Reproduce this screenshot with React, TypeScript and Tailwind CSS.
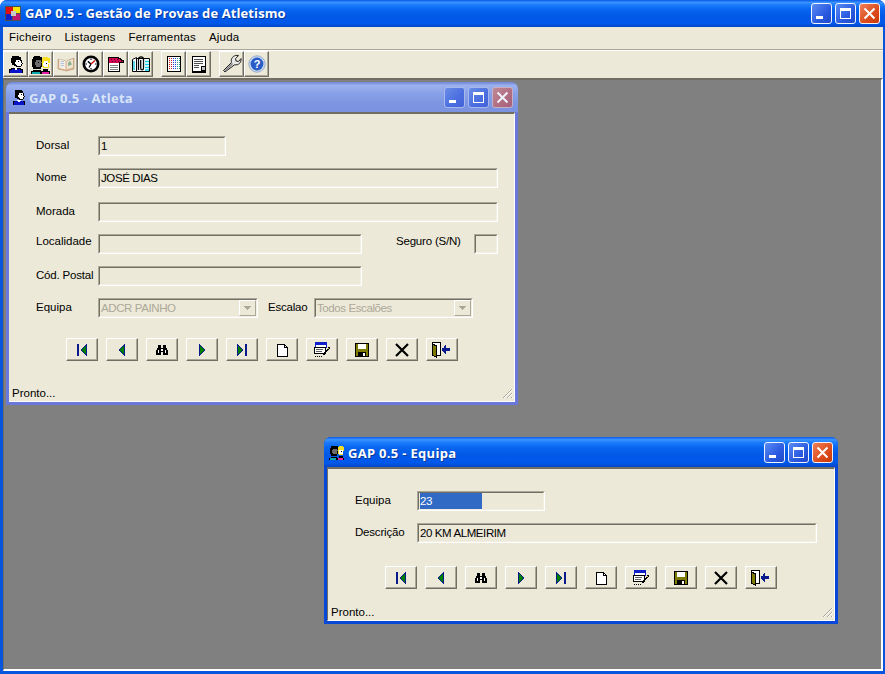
import React from 'react';

const FONT = "font-['Liberation_Sans',sans-serif]";
const TITLE_FONT = "font-['Open_Sans',sans-serif]";

const Person = ({ s = 18 }: { s?: number }) => (
  <svg width={s} height={s} viewBox="0 0 18 18" shapeRendering="crispEdges">
    <path d="M2 18V14H4V13H7V12H11V13H14V14H16V18Z" fill="#000" />
    <path d="M3 18V15H5V14H13V15H15V18Z" fill="#0a14c8" />
    <path d="M7 13V12H11V13H10V15H8V13Z" fill="#fff" />
    <path d="M5 1H12V2H14V5H15V8H16V9H15V11H14V12H9V11H7V10H5V8H4V3H5Z" fill="#000" />
    <path d="M9 5H13V6H14V8H15V9H14V11H10V10H9V9H8V7H9Z" fill="#fff" />
    <rect x="11" y="6" width="1" height="1" fill="#000" />
  </svg>
);

const People = ({ s = 20 }: { s?: number }) => (
  <svg width={s} height={s} viewBox="0 0 20 20" shapeRendering="crispEdges">
    <path d="M2 3H3V2H9V3H11V5H12V13H10V15H2V13H1V5H2Z" fill="#000" />
    <path d="M5 6H10V8H11V9H10V12H9V13H5V11H4V8H5Z" fill="#6c6c6c" />
    <rect x="7" y="8" width="1" height="1" fill="#000" />
    <path d="M0 20V17H2V16H10V20Z" fill="#000" />
    <path d="M1 20V18H9V20Z" fill="#10a8a8" />
    <path d="M11 4H12V3H17V4H19V9H18V14H12V13H11Z" fill="#f8e020" />
    <path d="M13 7H17V9H18V10H17V13H13V12H12V9H13Z" fill="#fff" />
    <rect x="15" y="9" width="1" height="1" fill="#000" />
    <path d="M10 20V17H12V15H17V17H19V20Z" fill="#000" />
    <path d="M11 20V18H18V20Z" fill="#e820a8" />
  </svg>
);

const Book = () => (
  <svg width="18" height="18" viewBox="0 0 18 18">
    <path d="M1 4L8 5.5L9 6.5L10 5.5L17 3V14L9.5 16L1 14Z" fill="#d8b08c" stroke="#b89878" strokeWidth=".6" />
    <path d="M2.2 4.2L8.5 6V14.6L2.2 13Z" fill="#f4efe4" />
    <path d="M9.6 6L16 4V12.6L9.6 14.6Z" fill="#ece4d2" />
    <path d="M11 8L13 5.8L15 9.5L11 11Z" fill="#8cb08c" />
    <path d="M3.5 6.5H7M3.5 8.5H7M3.5 10.5H7" stroke="#a8b8d8" strokeWidth=".8" />
  </svg>
);

const Clock = () => (
  <svg width="18" height="18" viewBox="0 0 18 18">
    <circle cx="9" cy="9" r="7.2" fill="#fff" stroke="#000" strokeWidth="2.6" />
    <path d="M9 3.5V5M9 13V14.5M3.5 9H5M13 9H14.5" stroke="#000" strokeWidth="1.2" />
    <path d="M9 9L5.8 6.4M9 9L7 12.5" stroke="#000" strokeWidth="1.4" />
    <path d="M9 9L13 5.5" stroke="#e00000" strokeWidth="1.2" />
  </svg>
);

const Notepad = () => (
  <svg width="18" height="18" viewBox="0 0 18 18" shapeRendering="crispEdges">
    <path d="M1 2H12V3H14V4H15V5H17V8H13V17H1Z" fill="#000" />
    <path d="M2 3H11V4H13V5H14V6H16V7H12V8H2Z" fill="#d40050" />
    <path d="M2 8H12V16H2Z" fill="#fff" />
    <path d="M3 10H11V11H3ZM3 12H11V13H3ZM3 14H11V15H3Z" fill="#808080" />
    <path d="M4 4H5V5H4ZM7 4H8V5H7ZM10 4H11V5H10ZM5 6H6V7H5ZM8 6H9V7H8ZM11 6H12V7H11ZM14 6H15V7H14Z" fill="#60002c" />
  </svg>
);

const Clip = () => (
  <svg width="20" height="18" viewBox="0 0 20 18">
    <path d="M1.5 4.5L5.5 2.5V16.5H1.5Z" fill="#fff" stroke="#000" />
    <path d="M5.5 3.5H18.5V16.5H5.5Z" fill="#fff" stroke="#000" />
    <path d="M3 6V15" stroke="#10c8d8" strokeWidth="1.4" />
    <path d="M14 6.5H18M14 9.5H18M14 12.5H18M14 15H18" stroke="#10d0e8" strokeWidth="1.4" />
    <path d="M7.5 15V4.5C7.5 1 12.5 1 12.5 4.5V13C12.5 15.5 9.7 15.5 9.7 13V5" fill="none" stroke="#000" strokeWidth="1.3" />
  </svg>
);

const GridDoc = () => (
  <svg width="16" height="18" viewBox="0 0 16 18" shapeRendering="crispEdges">
    <path d="M1.5 1.5H14.5V16.5H1.5Z" fill="#fff" stroke="#000" />
    <path d="M3 3V15M5 3V15" stroke="#e02020" strokeDasharray="1 1" />
    <path d="M7 3V15M9 3V15" stroke="#2040e0" strokeDasharray="1 1" />
    <path d="M11 3V15M13 3V15" stroke="#20a0a0" strokeDasharray="1 1" />
  </svg>
);

const FormDoc = () => (
  <svg width="16" height="18" viewBox="0 0 16 18" shapeRendering="crispEdges">
    <path d="M1.5 1.5H14.5V16.5H1.5Z" fill="#fff" stroke="#000" strokeWidth="1" />
    <path d="M3 4H12V5H3ZM3 6H12V7H3ZM3 8H12V9H3ZM3 10H8V11H3ZM3 12H8V13H3Z" fill="#505050" />
    <path d="M10.5 11.5H14.5V15.5H10.5Z" fill="#c0c0c0" stroke="#000" />
    <path d="M1 16H15V18H1Z" fill="#000" />
  </svg>
);

const Wrench = () => (
  <svg width="20" height="20" viewBox="0 0 20 20">
    <path d="M3 18L1.5 16.5L9.5 8.5C8.7 5.5 10 2.5 13.5 1.5C14.5 1.3 15.5 1.3 16.5 1.6L13.5 4.6L14 7L16.5 7.5L19 4.6C19.5 8 17 11.5 12.5 10.8Z" fill="#e8e8e8" stroke="#202020" strokeWidth="1" />
    <path d="M3 17L10.5 9.5" stroke="#808080" strokeWidth="1.4" />
  </svg>
);

const Help = () => (
  <svg width="18" height="18" viewBox="0 0 18 18">
    <circle cx="9" cy="9" r="8.2" fill="#c8d8f0" stroke="#8aa0c8" strokeWidth=".8" />
    <circle cx="9" cy="9" r="6.4" fill="#2a5cc8" />
    <text x="9" y="13" textAnchor="middle" fontSize="11" fontWeight="700" fill="#fff" fontFamily="Liberation Sans">?</text>
  </svg>
);

const AppLogo = () => (
  <svg width="16" height="15" viewBox="0 0 16 15" shapeRendering="crispEdges">
    <rect width="16" height="15" fill="#505050" />
    <rect x="1" y="1" width="7" height="7" fill="#e01010" />
    <rect x="8" y="1" width="7" height="6" fill="#f8e800" />
    <rect x="1" y="8" width="6" height="6" fill="#1020c8" />
    <rect x="8" y="8" width="7" height="6" fill="#c01870" />
    <rect x="6" y="5" width="5" height="5" fill="#c8c8c8" />
  </svg>
);

const NavFirst = () => (
  <svg width="14" height="14" viewBox="0 0 14 14" shapeRendering="crispEdges">
    <rect x="2" y="1" width="2" height="12" fill="#0a1a8c" />
    <path d="M11 1H12V13H11V12H10V11H9V10H8V9H7V8H6V6H7V5H8V4H9V3H10V2H11Z" fill="#0a1a8c" />
    <path d="M11 3V11H10V10H9V9H8V8H7V6H8V5H9V4H10V3Z" fill="#008000" />
  </svg>
);
const NavPrev = () => (
  <svg width="14" height="14" viewBox="0 0 14 14" shapeRendering="crispEdges">
    <path d="M9 1H10V13H9V12H8V11H7V10H6V9H5V8H4V6H5V5H6V4H7V3H8V2H9Z" fill="#0a1a8c" />
    <path d="M9 3V11H8V10H7V9H6V8H5V6H6V5H7V4H8V3Z" fill="#008000" />
  </svg>
);
const NavNext = () => (
  <svg width="14" height="14" viewBox="0 0 14 14" shapeRendering="crispEdges">
    <path d="M4 1H5V2H6V3H7V4H8V5H9V6H10V8H9V9H8V10H7V11H6V12H5V13H4Z" fill="#0a1a8c" />
    <path d="M5 3H6V4H7V5H8V6H9V8H8V9H7V10H6V11H5Z" fill="#008000" />
  </svg>
);
const NavLast = () => (
  <svg width="14" height="14" viewBox="0 0 14 14" shapeRendering="crispEdges">
    <rect x="10" y="1" width="2" height="12" fill="#0a1a8c" />
    <path d="M2 1H3V2H4V3H5V4H6V5H7V6H8V8H7V9H6V10H5V11H4V12H3V13H2Z" fill="#0a1a8c" />
    <path d="M3 3H4V4H5V5H6V6H7V8H6V9H5V10H4V11H3Z" fill="#008000" />
  </svg>
);
const Binoculars = () => (
  <svg width="14" height="12" viewBox="0 0 14 12" shapeRendering="crispEdges">
    <path d="M3 1H6V4H8V1H11V4H12V6H13V11H8V8H6V11H1V6H2V4H3Z" fill="#000" />
    <path d="M3 6H4V9H3ZM10 6H11V9H10ZM6 5H8V7H6Z" fill="#fff" />
  </svg>
);
const NewDoc = () => (
  <svg width="14" height="14" viewBox="0 0 14 14" shapeRendering="crispEdges">
    <path d="M2.5 1.5H9.5L12.5 4.5V13.5H2.5Z" fill="#fff" stroke="#000" />
    <path d="M9.5 1.5V4.5H12.5" fill="none" stroke="#000" />
  </svg>
);
const EditForm = () => (
  <svg width="18" height="16" viewBox="0 0 18 16" shapeRendering="crispEdges">
    <path d="M2.5 .5H13.5V5.5H2.5Z" fill="#fff" stroke="#1020c8" />
    <path d="M3 1H13V3H3Z" fill="#1020c8" />
    <path d="M1.5 5.5H12.5V11.5H1.5Z" fill="#fff" stroke="#000" />
    <path d="M3 7H10V8H3ZM3 9H9V10H3Z" fill="#606060" />
    <path d="M2 14H3V15H2ZM4 14H5V15H4ZM6 14H7V15H6ZM8 14H9V15H8Z" fill="#000" />
    <path d="M15 5H17V7H16V8H15V9H14V10H13V11H12V13H10V11H11V10H12V9H13V8H14V7H15Z" fill="#000" />
    <path d="M15 6H16V7H15V8H14V9H13V10H12V11H11V12H11V11H12V10H13V9H14V8H15Z" fill="#e8c020" />
  </svg>
);
const Floppy = () => (
  <svg width="14" height="14" viewBox="0 0 14 14" shapeRendering="crispEdges">
    <path d="M0 0H14V14H0Z" fill="#000" />
    <path d="M1 1H13V13H1Z" fill="#7f7a00" />
    <path d="M3 1H11V6H3Z" fill="#fff" />
    <path d="M3 9H11V14H3Z" fill="#000" />
    <path d="M8 10H10V13H8Z" fill="#fff" />
  </svg>
);
const CloseX = () => (
  <svg width="14" height="14" viewBox="0 0 14 14">
    <path d="M1 1L13 13M13 1L1 13" stroke="#000" strokeWidth="2.2" />
  </svg>
);
const ExitDoor = () => (
  <svg width="22" height="16" viewBox="0 0 22 16" shapeRendering="crispEdges">
    <path d="M1.5 .5H9.5V13.5H1.5Z" fill="#fff" stroke="#000" />
    <path d="M1 1H2V2H4V3H6V16H5V15H3V14H1Z" fill="#000" />
    <path d="M2 3H3V4H5V14H3V13H2Z" fill="#7f7a00" />
    <path d="M12 7H14V5H15V4H16V7H20V10H16V13H15V12H14V11H13V10H12Z" fill="#0a1a8c" transform="translate(-1 -1)" />
  </svg>
);

const Grip = () => (
  <svg width="12" height="12" viewBox="0 0 12 12" shapeRendering="crispEdges">
    <path d="M10 1H11V2H10ZM9 2H10V3H9ZM8 3H9V4H8ZM7 4H8V5H7ZM6 5H7V6H6ZM5 6H6V7H5ZM4 7H5V8H4ZM3 8H4V9H3ZM2 9H3V10H2ZM10 5H11V6H10ZM9 6H10V7H9ZM8 7H9V8H8ZM7 8H8V9H7ZM6 9H7V10H6ZM10 9H11V10H10Z" fill="#aca899" />
    <path d="M11 1H12V2H11ZM10 2H11V3H10ZM9 3H10V4H9ZM8 4H9V5H8ZM7 5H8V6H7ZM6 6H7V7H6ZM5 7H6V8H5ZM4 8H5V9H4ZM3 9H4V10H3ZM11 5H12V6H11ZM10 6H11V7H10ZM9 7H10V8H9ZM8 8H9V9H8ZM7 9H8V10H7ZM11 9H12V10H11Z" fill="#fff" />
  </svg>
);

type CaptionKind = 'active' | 'inactive';

const Caption = ({ kind }: { kind: CaptionKind }) => {
  const blue =
    kind === 'active'
      ? 'border-[#f0f4ff] bg-[linear-gradient(135deg,#5a8cf5,#2a5ae0_60%,#2048c8)]'
      : 'border-[#a8b8ec] bg-[linear-gradient(135deg,#6a8ce8,#4a6ee0_60%,#4462d8)]';
  const red =
    kind === 'active'
      ? 'border-[#f8f0ec] bg-[linear-gradient(135deg,#ee8058,#dc4c1c_60%,#c83808)]'
      : 'border-[#c8b0c4] bg-[linear-gradient(135deg,#c08a98,#b06c80_60%,#a4607c)]';
  const ink = kind === 'active' ? '#fff' : '#eef2fc';
  return (
    <div className="flex gap-[3px]">
      <div className={`w-[21px] h-[21px] rounded-[3px] border flex items-end pl-[4px] pb-[4px] ${blue}`}>
        <div className="w-[7px] h-[3px] bg-white" />
      </div>
      <div className={`w-[21px] h-[21px] rounded-[3px] border flex items-center justify-center ${blue}`}>
        <div className="w-[11px] h-[11px] border border-t-[3px] border-white" />
      </div>
      <div className={`w-[21px] h-[21px] rounded-[3px] border flex items-center justify-center ${red}`}>
        <svg width="13" height="13" viewBox="0 0 13 13">
          <path d="M1.5 1.5L11.5 11.5M11.5 1.5L1.5 11.5" stroke={ink} strokeWidth="2" />
        </svg>
      </div>
    </div>
  );
};

const Field = ({ className = '', children }: { className?: string; children?: React.ReactNode }) => (
  <div className={`h-[20px] shrink-0 border border-t-[#aca899] border-l-[#aca899] border-b-white border-r-white ${className}`}>
    <div className="h-full border border-t-[#716f64] border-l-[#716f64] border-b-[#f1efe2] border-r-[#f1efe2] pl-[1px] leading-[16px] tracking-[-0.4px] text-black whitespace-nowrap overflow-hidden">
      {children}
    </div>
  </div>
);

const Combo = ({ className = '', value }: { className?: string; value: string }) => (
  <Field className={className}>
    <div className="flex h-full justify-between text-[#aca899]">
      <span>{value}</span>
      <div className="w-[17px] h-[16px] bg-[#ece9d8] border border-t-white border-l-white border-b-[#aca899] border-r-[#aca899] flex items-center justify-center">
        <svg width="7" height="4" viewBox="0 0 7 4" shapeRendering="crispEdges">
          <path d="M0 0H7V1H6V2H5V3H4V4H3V3H2V2H1V1H0Z" fill="#aca899" />
        </svg>
      </div>
    </div>
  </Field>
);

const NavButton = ({ children }: { children: React.ReactNode }) => (
  <div className="w-[32px] h-[23px] border border-t-white border-l-white border-b-[#716f64] border-r-[#716f64] bg-[#ece9d8] flex items-center justify-center shadow-[inset_-1px_-1px_0_#aca899]">
    {children}
  </div>
);

const NavBar = () => (
  <div className="flex gap-[8px]">
    <NavButton><NavFirst /></NavButton>
    <NavButton><NavPrev /></NavButton>
    <NavButton><Binoculars /></NavButton>
    <NavButton><NavNext /></NavButton>
    <NavButton><NavLast /></NavButton>
    <NavButton><NewDoc /></NavButton>
    <NavButton><EditForm /></NavButton>
    <NavButton><Floppy /></NavButton>
    <NavButton><CloseX /></NavButton>
    <NavButton><ExitDoor /></NavButton>
  </div>
);

const ToolButton = ({ children }: { children: React.ReactNode }) => (
  <div className="w-[25px] h-[26px] border border-t-white border-l-white border-b-[#716f64] border-r-[#716f64] flex items-center justify-center shadow-[inset_-1px_-1px_0_#aca899]">
    {children}
  </div>
);

const Status = () => (
  <div className="mt-auto flex items-end justify-between h-[18px] pl-[3px] pb-[1px] pr-[1px]">
    <span className="leading-[14px]">Pronto...</span>
    <Grip />
  </div>
);

const Row = ({ className = '', children }: { className?: string; children: React.ReactNode }) => (
  <div className={`flex items-center ${className}`}>{children}</div>
);

const Label = ({ className = '', children }: { className?: string; children: React.ReactNode }) => (
  <span className={`w-[62px] shrink-0 whitespace-nowrap ${className}`}>{children}</span>
);

export default function App() {
  return (
    <div className={`${FONT} relative w-[885px] h-[674px] text-[11.5px] text-black bg-[#0855dd] rounded-t-[7px] flex flex-col overflow-hidden`}>
      <div className="h-[27px] shrink-0 flex items-center pl-[5px] pr-[4px] bg-[linear-gradient(180deg,#0a5ae8_0%,#3a93ff_9%,#1c7cfa_18%,#0866f0_35%,#0258e6_60%,#0058ec_85%,#0048c8_100%)]">
        <AppLogo />
        <span className={`${TITLE_FONT} ml-[4px] pt-[1px] text-[13px] font-bold text-white [text-shadow:1px_1px_0_#0a3a9c] tracking-[0.1px]`}>
          GAP 0.5 - Gestão de Provas de Atletismo
        </span>
        <div className="ml-auto mr-[1px]">
          <Caption kind="active" />
        </div>
      </div>

      <div className="flex-1 min-h-0 ml-[3px] mr-[2px] mb-[3px] bg-[#ece9d8] flex flex-col">
        <div className="h-[22px] shrink-0 flex items-center gap-[13px] pl-[6px] tracking-[0.2px]">
          <span>Ficheiro</span>
          <span>Listagens</span>
          <span>Ferramentas</span>
          <span>Ajuda</span>
        </div>
        <div className="h-[2px] shrink-0 border-t border-b border-t-[#aca899] border-b-white" />
        <div className="h-[27px] shrink-0 flex items-start gap-[8px]">
          <div className="flex">
            <ToolButton><Person /></ToolButton>
            <ToolButton><People /></ToolButton>
            <ToolButton><Book /></ToolButton>
            <ToolButton><Clock /></ToolButton>
            <ToolButton><Notepad /></ToolButton>
            <ToolButton><Clip /></ToolButton>
          </div>
          <div className="flex">
            <ToolButton><GridDoc /></ToolButton>
            <ToolButton><FormDoc /></ToolButton>
          </div>
          <div className="flex">
            <ToolButton><Wrench /></ToolButton>
            <ToolButton><Help /></ToolButton>
          </div>
        </div>

        <div className="relative flex-1 min-h-0 bg-[#808080] border-t-2 border-l border-b-2 border-r-2 border-t-[#716f64] border-l-[#716f64] border-b-white border-r-white">
          {/* Atleta: inactive child window */}
          <div className="absolute left-[2px] top-[2px] w-[512px] h-[323px] rounded-t-[7px] bg-[#6a78dc] flex flex-col px-[3px] pb-[3px]">
            <div className="h-[30px] -mx-[3px] shrink-0 rounded-t-[7px] flex items-center pl-[5px] pr-[5px] bg-[linear-gradient(180deg,#6f86d8_0%,#9cb2ee_12%,#8aa2e8_35%,#7c96e2_70%,#7a92e0_100%)]">
              <Person s={16} />
              <span className={`${TITLE_FONT} ml-[2px] pt-[3px] text-[13px] font-bold text-[#d8e4f8] tracking-[0.3px]`}>GAP 0.5 - Atleta</span>
              <div className="ml-auto">
                <Caption kind="inactive" />
              </div>
            </div>
            <div className="flex-1 min-h-0 flex flex-col bg-[#ece9d8] border-t-2 border-t-[#716f64] border-r border-b border-r-white border-b-white pt-[22px]">
              <div className="pl-[27px]">
                <Row><Label>Dorsal</Label><Field className="w-[128px]">1</Field></Row>
                <Row className="mt-[12px]"><Label>Nome</Label><Field className="w-[400px]">JOSÉ DIAS</Field></Row>
                <Row className="mt-[14px]"><Label>Morada</Label><Field className="w-[400px]" /></Row>
                <Row className="mt-[12px]">
                  <Label className="-translate-y-[2px]">Localidade</Label>
                  <Field className="w-[264px]" />
                  <span className="ml-[34px] w-[78px] -translate-y-[2px] tracking-[-0.2px]">Seguro (S/N)</span>
                  <Field className="w-[24px]" />
                </Row>
                <Row className="mt-[12px]"><Label className="tracking-[-0.2px]">Cód. Postal</Label><Field className="w-[264px]" /></Row>
                <Row className="mt-[12px]">
                  <Label>Equipa</Label>
                  <Combo className="w-[160px]" value="ADCR PAINHO" />
                  <span className="ml-[10px] w-[46px] tracking-[-0.2px]">Escalao</span>
                  <Combo className="w-[159px]" value="Todos Escalões" />
                </Row>
              </div>
              <div className="mt-[20px] pl-[57px]">
                <NavBar />
              </div>
              <Status />
            </div>
          </div>

          {/* Equipa: active child window */}
          <div className="absolute left-[320px] top-[357px] w-[514px] h-[187px] rounded-t-[7px] bg-[#0848d8] flex flex-col px-[3px] pb-[3px]">
            <div className="h-[30px] -mx-[3px] shrink-0 rounded-t-[7px] flex items-center pl-[5px] pr-[5px] bg-[linear-gradient(180deg,#0a5ae8_0%,#3a93ff_9%,#1c7cfa_18%,#0866f0_35%,#0258e6_60%,#0058ec_85%,#0048c8_100%)]">
              <People s={16} />
              <span className={`${TITLE_FONT} ml-[3px] pt-[3px] text-[13px] font-bold text-white [text-shadow:1px_1px_0_#0a3a9c] tracking-[0.3px]`}>GAP 0.5 - Equipa</span>
              <div className="ml-auto">
                <Caption kind="active" />
              </div>
            </div>
            <div className="flex-1 min-h-0 flex flex-col bg-[#ece9d8] border-t-2 border-t-[#716f64] border-l border-l-[#716f64] border-r border-b border-r-white border-b-white pt-[22px]">
              <div className="pl-[27px]">
                <Row>
                  <Label>Equipa</Label>
                  <Field className="w-[128px]">
                    <span className="inline-block w-[62px] h-[16px] bg-[#316ac5] text-white">23</span>
                  </Field>
                </Row>
                <Row className="mt-[12px]"><Label className="tracking-[-0.2px]">Descrição</Label><Field className="w-[400px]">20 KM ALMEIRIM</Field></Row>
              </div>
              <div className="mt-[23px] pl-[57px]">
                <NavBar />
              </div>
              <Status />
            </div>
          </div>
        </div>
      </div>
    </div>
  );
}
